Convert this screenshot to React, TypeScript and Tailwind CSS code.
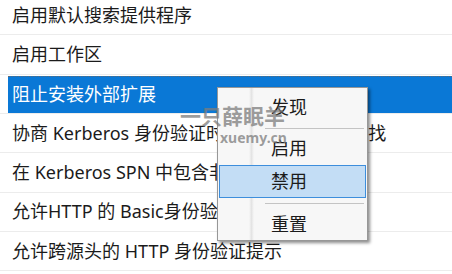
import React from "react";

const rows = [
  "启用默认搜索提供程序",
  "启用工作区",
  "阻止安装外部扩展",
  "协商 Kerberos 身份验证时，停用 CNAME 查找",
  "在 Kerberos SPN 中包含非标准端口",
  "允许HTTP 的 Basic身份验证",
  "允许跨源头的 HTTP 身份验证提示",
];

const font = { fontFamily: '"Noto Sans", "Noto Sans CJK SC", sans-serif' };

export default function App() {
  return (
    <div
      className="relative w-[452px] h-[274px] overflow-hidden bg-white text-[18px] text-[#1b1b1b]"
      style={font}
    >
      <div className="-mt-[4px] flex flex-col">
        {rows.map((r, i) =>
          i === 2 ? (
            <div key={i} className="h-[39.33px] flex flex-col border-b border-[#ececec]">
              <div className="mt-[1px] ml-[8px] h-[37.33px] flex items-center pl-[4px] bg-[#0a78d6] text-white border-t border-dotted border-[#5c6b78] whitespace-nowrap">
                {r}
              </div>
            </div>
          ) : (
            <div
              key={i}
              className="h-[39.33px] flex items-center pl-[12px] border-b border-[#ececec] whitespace-nowrap"
            >
              {r}
            </div>
          )
        )}
      </div>

      {/* context menu */}
      <div className="absolute left-[217px] top-[87px] w-[151px] bg-[#f7f7f7] border border-[#979797] shadow-[2px_2px_3px_rgba(0,0,0,0.45)] pt-[2px] pb-[1px] flex flex-col">
        <div className="absolute left-[31px] top-0 bottom-0 w-[5px] bg-gradient-to-r from-[#f7f7f7] via-[#e4e4e4] to-[#f7f7f7]" />
        <div className="relative mx-[1px] h-[34px] flex items-center pl-[51px] border border-transparent">发现</div>
        <div className="relative h-[8px] flex items-center pl-[47px]">
          <div className="w-[99px] border-t border-[#c4c4c4]" />
        </div>
        <div className="relative mx-[1px] h-[33px] flex items-center pl-[51px] border border-transparent">启用</div>
        <div className="relative mx-[1px] h-[33px] flex items-center pl-[51px] border border-[#3d8edc] bg-[#c3ddf5]">禁用</div>
        <div className="relative h-[11px] flex items-center pl-[47px]">
          <div className="w-[99px] border-t border-[#c4c4c4]" />
        </div>
        <div className="relative mx-[1px] h-[30px] flex items-center pl-[51px] border border-transparent">重置</div>
      </div>

      {/* watermark */}
      <div className="absolute left-[178px] top-[103px] flex flex-col items-center pointer-events-none text-[rgba(125,125,125,0.75)] font-bold">
        <div className="text-[21px] leading-[26px]">一只薛眠羊</div>
        <div className="text-[14px] leading-[14px] mt-[2px] ml-[42px]">xuemy.cn</div>
      </div>
    </div>
  );
}
